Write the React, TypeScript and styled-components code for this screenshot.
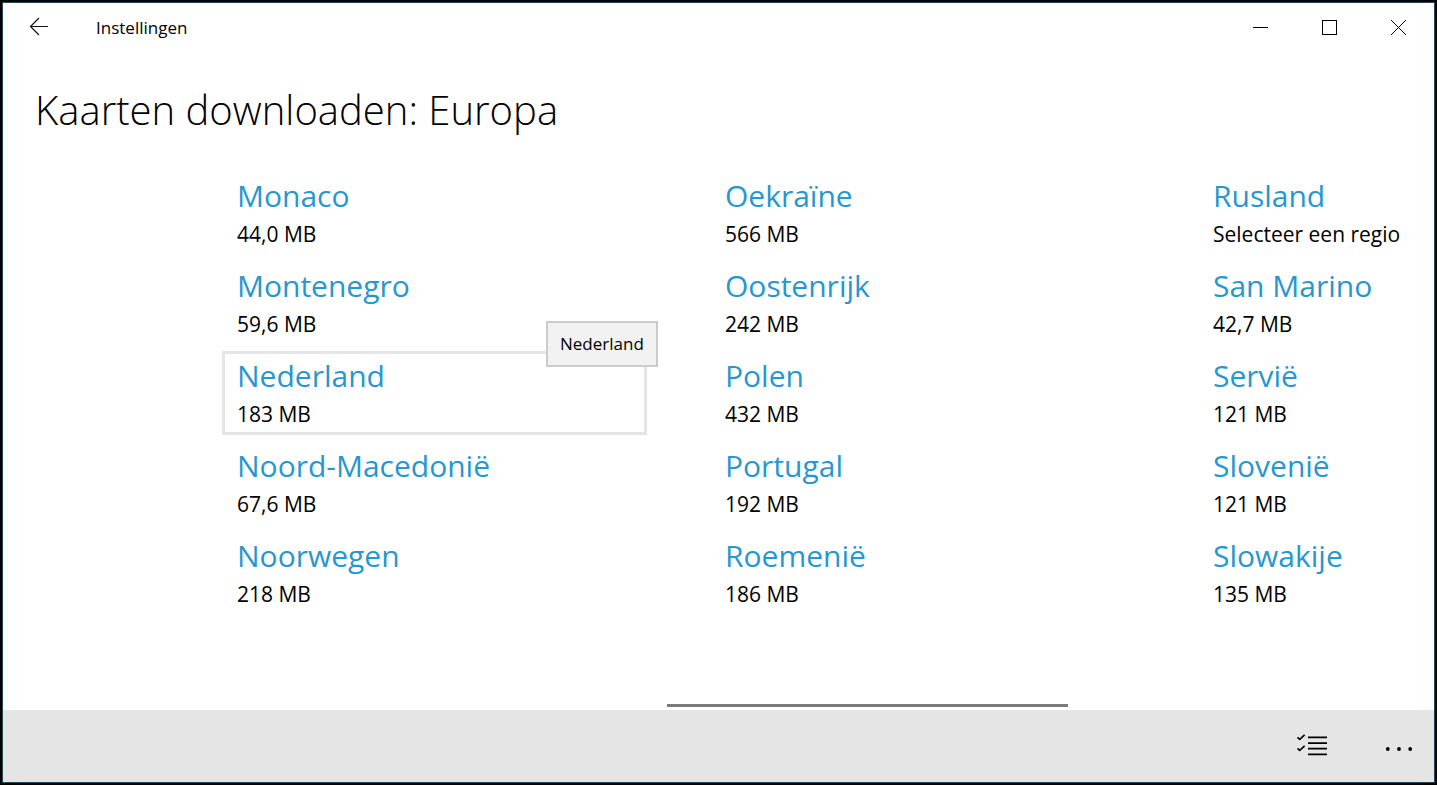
import React from "react";
import styled, { createGlobalStyle } from "styled-components";

const GlobalStyle = createGlobalStyle`
  *, *::before, *::after { box-sizing: border-box; }
  body {
    margin: 0;
    background: #000;
    color: #000;
    font-family: "Segoe UI", "Open Sans", "Noto Sans", sans-serif;
  }
  h1, ul { margin: 0; padding: 0; }
  button {
    padding: 0;
    border: 0;
    background: none;
    color: inherit;
    font: inherit;
  }
`;

const Desktop = styled.div`
  display: flex;
  min-height: 100vh;
  padding: 2px;
`;

const Window = styled.div`
  display: flex;
  flex: 1;
  flex-direction: column;
  min-width: 0;
  border: 1px solid #22485c;
  background: #fff;
`;

const TitleBar = styled.header`
  display: flex;
  align-items: flex-start;
  height: 48px;
  padding-right: 1px;
`;

const CaptionButton = styled.button`
  display: grid;
  place-items: center;
  width: 69px;
  height: 48px;
`;

const BackButton = styled(CaptionButton)`
  width: 72px;
`;

const AppName = styled.span`
  flex: 1;
  padding: 13px 0 0 21px;
  font-size: 17px;
  line-height: 24px;
`;

const Heading = styled.h1`
  padding: 32px 32px 0;
  font-size: 40px;
  font-weight: 300;
  line-height: 54px;
`;

const Content = styled.main`
  display: flex;
  flex: 1;
  flex-direction: column;
  overflow: hidden;
`;

const RegionList = styled.ul`
  display: grid;
  grid-auto-columns: 425px;
  grid-auto-flow: column;
  grid-template-rows: repeat(5, 84px);
  gap: 6px 63px;
  padding: 34px 0 0 219px;
  list-style: none;
`;

const RegionItem = styled.li`
  position: relative;
`;

const RegionButton = styled.button<{ $active: boolean }>`
  display: flex;
  flex-direction: column;
  width: 100%;
  height: 100%;
  padding: 0 12px;
  border: 3px solid ${(p) => (p.$active ? "#e5e5e5" : "transparent")};
  text-align: left;
`;

const RegionName = styled.span`
  color: #2797cf;
  font-size: 30px;
  line-height: 44px;
`;

const RegionSize = styled.span`
  font-size: 21px;
  line-height: 32px;
`;

const Tooltip = styled.div`
  position: absolute;
  top: -30px;
  left: 324px;
  padding: 9px 12px;
  border: 2px solid #ccc;
  background: #f2f2f2;
  font-size: 17px;
  line-height: 24px;
`;

const ScrollTrack = styled.div`
  display: flex;
  margin-top: auto;
  padding: 0 0 3px 664px;
`;

const ScrollThumb = styled.div`
  width: 401px;
  height: 3px;
  background: #7a7a7a;
`;

const CommandBar = styled.footer`
  display: flex;
  justify-content: flex-end;
  height: 72px;
  background: #e5e5e5;
`;

const CommandButton = styled.button<{ $width: number }>`
  display: grid;
  place-items: center;
  width: ${(p) => p.$width}px;
  height: 72px;
`;

type Region = { name: string; size: string };

const regions: Region[] = [
  { name: "Monaco", size: "44,0 MB" },
  { name: "Montenegro", size: "59,6 MB" },
  { name: "Nederland", size: "183 MB" },
  { name: "Noord-Macedonië", size: "67,6 MB" },
  { name: "Noorwegen", size: "218 MB" },
  { name: "Oekraïne", size: "566 MB" },
  { name: "Oostenrijk", size: "242 MB" },
  { name: "Polen", size: "432 MB" },
  { name: "Portugal", size: "192 MB" },
  { name: "Roemenië", size: "186 MB" },
  { name: "Rusland", size: "Selecteer een regio" },
  { name: "San Marino", size: "42,7 MB" },
  { name: "Servië", size: "121 MB" },
  { name: "Slovenië", size: "121 MB" },
  { name: "Slowakije", size: "135 MB" },
];

const hovered = "Nederland";

const BackIcon = () => (
  <svg width="20" height="20" viewBox="0 0 20 20" fill="none" stroke="#111" strokeWidth="1.2" aria-hidden="true">
    <path d="M19 9.5H1.5M10 1L1.5 9.5L10 18" />
  </svg>
);

const MinimizeIcon = () => (
  <svg width="15" height="15" viewBox="0 0 15 15" stroke="#000" aria-hidden="true">
    <path d="M0 7.5H15" />
  </svg>
);

const MaximizeIcon = () => (
  <svg width="15" height="15" viewBox="0 0 15 15" fill="none" stroke="#000" aria-hidden="true">
    <rect x="0.5" y="0.5" width="14" height="14" />
  </svg>
);

const CloseIcon = () => (
  <svg width="15" height="15" viewBox="0 0 15 15" stroke="#000" aria-hidden="true">
    <path d="M0 0L15 15M15 0L0 15" />
  </svg>
);

const SelectIcon = () => (
  <svg width="32" height="24" viewBox="0 0 32 24" fill="none" stroke="#000" aria-hidden="true">
    <path d="M13 3.4H32M13 9.1H32M13 14.6H32M13 20.4H32" strokeWidth="1.8" />
    <path d="M2.5 3.3L4.7 5.3L9.6 0.8M2.5 14.3L4.7 16.3L9.6 11.8" strokeWidth="1.6" />
  </svg>
);

const MoreIcon = () => (
  <svg width="30" height="12" viewBox="0 0 30 12" aria-hidden="true">
    <circle cx="4.8" cy="9" r="1.9" />
    <circle cx="16" cy="9" r="1.9" />
    <circle cx="27.2" cy="9" r="1.9" />
  </svg>
);

export default function App() {
  return (
    <>
      <GlobalStyle />
      <Desktop>
        <Window>
          <TitleBar>
            <BackButton aria-label="Terug"><BackIcon /></BackButton>
            <AppName>Instellingen</AppName>
            <CaptionButton aria-label="Minimaliseren"><MinimizeIcon /></CaptionButton>
            <CaptionButton aria-label="Maximaliseren"><MaximizeIcon /></CaptionButton>
            <CaptionButton aria-label="Sluiten"><CloseIcon /></CaptionButton>
          </TitleBar>
          <Content>
            <Heading>Kaarten downloaden: Europa</Heading>
            <RegionList>
              {regions.map(({ name, size }) => (
                <RegionItem key={name}>
                  <RegionButton $active={name === hovered}>
                    <RegionName>{name}</RegionName>
                    <RegionSize>{size}</RegionSize>
                  </RegionButton>
                  {name === hovered && <Tooltip role="tooltip">{name}</Tooltip>}
                </RegionItem>
              ))}
            </RegionList>
            <ScrollTrack>
              <ScrollThumb />
            </ScrollTrack>
          </Content>
          <CommandBar>
            <CommandButton $width={102} aria-label="Selecteren"><SelectIcon /></CommandButton>
            <CommandButton $width={72} aria-label="Meer"><MoreIcon /></CommandButton>
          </CommandBar>
        </Window>
      </Desktop>
    </>
  );
}
